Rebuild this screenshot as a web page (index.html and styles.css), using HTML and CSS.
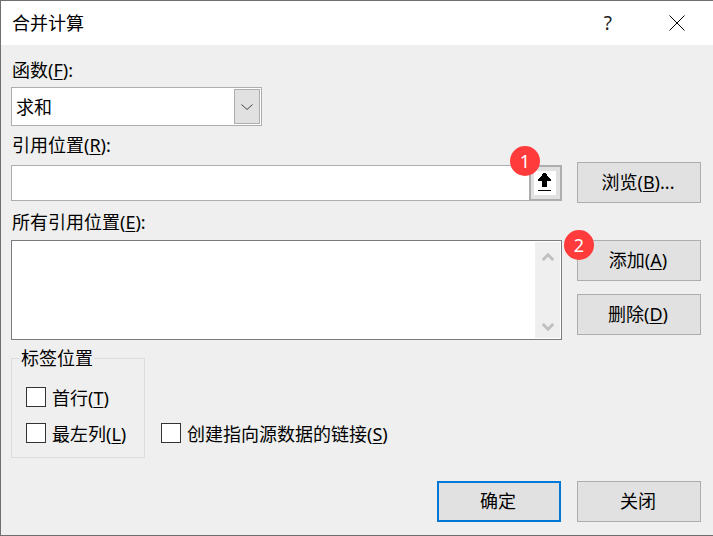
FILE: index.html
```html
<!DOCTYPE html>
<html lang="zh-CN">
<head>
<meta charset="utf-8">
<title>合并计算</title>
<link rel="stylesheet" href="styles.css">
</head>
<body>
<div class="dialog">
  <header class="titlebar">
    <span class="title">合并计算</span>
    <span class="help">?</span>
    <svg class="close" width="16" height="16" viewBox="0 0 16 16"><path d="M0.5 0.5L15.5 15.5M15.5 0.5L0.5 15.5" fill="none" stroke="#000" stroke-width="1"/></svg>
  </header>
  <main class="content">
    <div class="label">函数(<u>F</u>):</div>
    <div class="combo">
      <span class="combo-value">求和</span>
      <span class="combo-btn"><svg width="12" height="6" viewBox="0 0 12 6"><path d="M0.5 0.5L6 5.5L11.5 0.5" fill="none" stroke="#444" stroke-width="1"/></svg></span>
    </div>
    <div class="label ref-label">引用位置(<u>R</u>):</div>
    <div class="row ref-row">
      <div class="ref-group">
        <div class="ref-input"></div>
        <div class="ref-btn">
          <span class="ref-btn-inner"><svg width="13" height="19" viewBox="0 0 13 19"><path d="M5 1H8V2H9V4H10V5H11V6H12V7H13V9H9V15H4V9H0V7H1V6H2V5H3V4H4V2H5Z" fill="#000" shape-rendering="crispEdges"/><rect x="0" y="18" width="13" height="1" fill="#000" shape-rendering="crispEdges"/></svg></span>
        </div>
        <span class="badge badge-one">1</span>
      </div>
      <button class="btn">浏览(<u>B</u>)...</button>
    </div>
    <div class="label list-label">所有引用位置(<u>E</u>):</div>
    <div class="row list-row">
      <div class="list">
        <div class="scrollbar">
          <svg width="12" height="8" viewBox="0 0 12 8"><path d="M0.8 7L6 1.8L11.2 7" fill="none" stroke="#c0c0c0" stroke-width="3"/></svg>
          <svg width="12" height="8" viewBox="0 0 12 8"><path d="M0.8 1L6 6.2L11.2 1" fill="none" stroke="#c0c0c0" stroke-width="3"/></svg>
        </div>
      </div>
      <div class="side">
        <button class="btn">添加(<u>A</u>)</button>
        <button class="btn">删除(<u>D</u>)</button>
        <span class="badge badge-two">2</span>
      </div>
    </div>
    <div class="options">
      <fieldset class="group">
        <legend class="legend">标签位置</legend>
        <label class="check"><span class="box"></span><span>首行(<u>T</u>)</span></label>
        <label class="check"><span class="box"></span><span>最左列(<u>L</u>)</span></label>
      </fieldset>
      <label class="check link-check"><span class="box"></span><span>创建指向源数据的链接(<u>S</u>)</span></label>
    </div>
    <div class="footer">
      <button class="btn default">确定</button>
      <button class="btn">关闭</button>
    </div>
  </main>
</div>
</body>
</html>
```
FILE: styles.css
```css
* { box-sizing: border-box; }
html, body { margin: 0; padding: 0; }
body {
  width: 713px;
  height: 536px;
  overflow: hidden;
  font-family: "Noto Sans", "Noto Sans CJK SC", sans-serif;
  font-size: 18px;
  color: #000;
}
u { text-underline-offset: 2px; text-decoration-thickness: 1px; }
.dialog {
  width: 713px;
  height: 536px;
  background: #efefef;
  border: 1px solid #6f6f6f;
  border-right: 0;
  display: flex;
  flex-direction: column;
}
.titlebar {
  height: 44px;
  background: #fff;
  display: flex;
  align-items: center;
  padding: 0 28px 0 11px;
  flex: none;
}
.title { line-height: 24px; flex: 1; }
.help { font-size: 19px; line-height: 24px; margin-right: 57px; color: #222; }
.close { display: block; }
.content { padding: 13px 11px 0 10px; flex: 1; }
.label { height: 24px; line-height: 24px; padding-left: 1px; }
.combo {
  margin-top: 5px;
  width: 251px;
  height: 39px;
  background: #fff;
  border: 1px solid #adadad;
  display: flex;
  align-items: center;
  justify-content: space-between;
  padding: 1px 1px 1px 4px;
}
.combo-value { margin-bottom: 2px; }
.combo-btn {
  width: 26px;
  height: 35px;
  background: #e1e1e1;
  border: 1px solid #adadad;
  display: flex;
  align-items: center;
  justify-content: center;
}
.ref-label { margin-top: 7px; }
.row { display: flex; gap: 15px; }
.ref-row { margin-top: 5px; height: 41px; align-items: flex-start; }
.ref-group {
  position: relative;
  width: 551px;
  height: 36px;
  margin-top: 3px;
  display: flex;
}
.ref-input { flex: 1; background: #fff; border: 1px solid #adadad; border-right: 0; }
.ref-btn {
  width: 33px;
  background: #e1e1e1;
  border: 2px solid #adadad;
  padding: 4px 0 0 3px;
}
.ref-btn-inner {
  width: 22px;
  height: 24px;
  background: #fff;
  display: block;
  padding: 1px 0 0 4px;
}
.ref-btn-inner svg { display: block; }
.btn {
  width: 124px;
  height: 41px;
  flex: none;
  padding: 0 2px 3px 0;
  font: inherit;
  color: #000;
  background: #e1e1e1;
  border: 1px solid #adadad;
}
.badge {
  position: absolute;
  width: 30px;
  height: 30px;
  border-radius: 50%;
  background: #ff3b3b;
  color: #fff;
  font-size: 18px;
  line-height: 30px;
  text-align: center;
}
.badge-one { left: 499px; top: -19px; }
.badge-two { left: -13px; top: -10px; }
.list-label { margin-top: 7px; }
.list-row { margin-top: 6px; }
.list {
  width: 551px;
  height: 100px;
  background: #fff;
  border: 1px solid #7a7a80;
  padding: 1px;
  display: flex;
  justify-content: flex-end;
}
.scrollbar {
  width: 25px;
  background: #efefef;
  display: flex;
  flex-direction: column;
  justify-content: space-between;
  align-items: center;
  padding: 11px 0 7px;
}
.scrollbar svg { display: block; }
.side {
  position: relative;
  display: flex;
  flex-direction: column;
  gap: 13px;
}
.options {
  margin-top: 6px;
  display: flex;
  align-items: flex-end;
  gap: 16px;
}
.group {
  width: 134px;
  height: 112px;
  margin: 0;
  padding: 15px 0 0 14px;
  border: 1px solid #dcdcdc;
}
.legend { margin-left: -6px; padding: 0 1px; height: 24px; line-height: 24px; }
.check { display: flex; align-items: center; gap: 6px; height: 24px; white-space: nowrap; }
.group .check + .check { margin-top: 12px; }
.link-check { margin-bottom: 13px; }
.box {
  width: 20px;
  height: 20px;
  background: #fff;
  border: 1px solid #333;
  flex: none;
}
.footer {
  margin-top: 23px;
  padding-right: 1px;
  display: flex;
  justify-content: flex-end;
  gap: 16px;
}
.btn.default { border: 2px solid #0078d7; }
```
